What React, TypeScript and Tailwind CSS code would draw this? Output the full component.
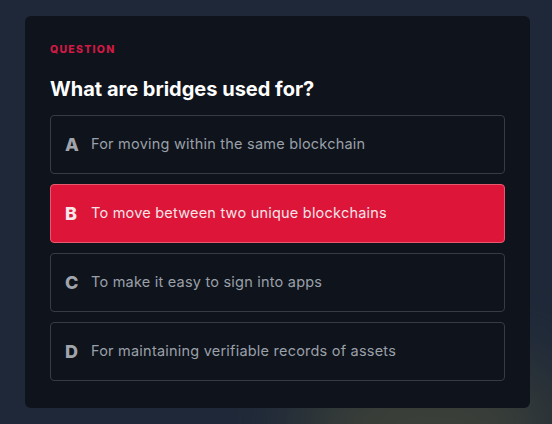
import React from 'react';

interface Option {
  letter: string;
  text: string;
}

const options: Option[] = [
  { letter: 'A', text: 'For moving within the same blockchain' },
  { letter: 'B', text: 'To move between two unique blockchains' },
  { letter: 'C', text: 'To make it easy to sign into apps' },
  { letter: 'D', text: 'For maintaining verifiable records of assets' },
];

const selected = 'B';

const App: React.FC = () => {
  return (
    <div
      className="relative w-[552px] h-[424px] overflow-hidden bg-[#1e2838] pt-4 pl-[25px]"
      style={{ fontFamily: 'Inter, "Noto Sans", sans-serif' }}
    >
      {/* soft glow behind the card's bottom edge */}
      <div className="absolute left-[300px] top-[370px] w-[260px] h-[110px] rounded-full bg-[#55553a] opacity-60 blur-[40px]" />

      <div className="relative w-[505px] h-[392px] rounded-md bg-[#0f131b] px-[25px] pt-[29px]">
        <div className="text-[10.5px] font-extrabold tracking-[0.12em] text-[#d01a45] leading-none">
          QUESTION
        </div>
        <h2 className="mt-[23px] text-[20px] font-bold text-white leading-none">
          What are bridges used for?
        </h2>

        <div className="mt-[16px] flex flex-col gap-[10px]">
          {options.map((opt) => {
            const active = opt.letter === selected;
            return (
              <div
                key={opt.letter}
                className={`h-[59px] flex items-center gap-[12px] rounded-[4px] border px-[14px] pt-px ${
                  active
                    ? 'bg-[#dd1539] border-[#e65a70] text-[#f6e4e8]'
                    : 'bg-[#0f131b] border-[#363b45] text-[#9aa0a9]'
                }`}
              >
                <span
                  className={`w-[14px] text-[18px] font-extrabold leading-none ${
                    active ? 'text-[#f8e8eb]' : 'text-[#a0a4ab]'
                  }`}
                >
                  {opt.letter}
                </span>
                <span className="text-[14.5px] font-normal leading-none tracking-[0.015em]">{opt.text}</span>
              </div>
            );
          })}
        </div>
      </div>
    </div>
  );
};

export default App;
